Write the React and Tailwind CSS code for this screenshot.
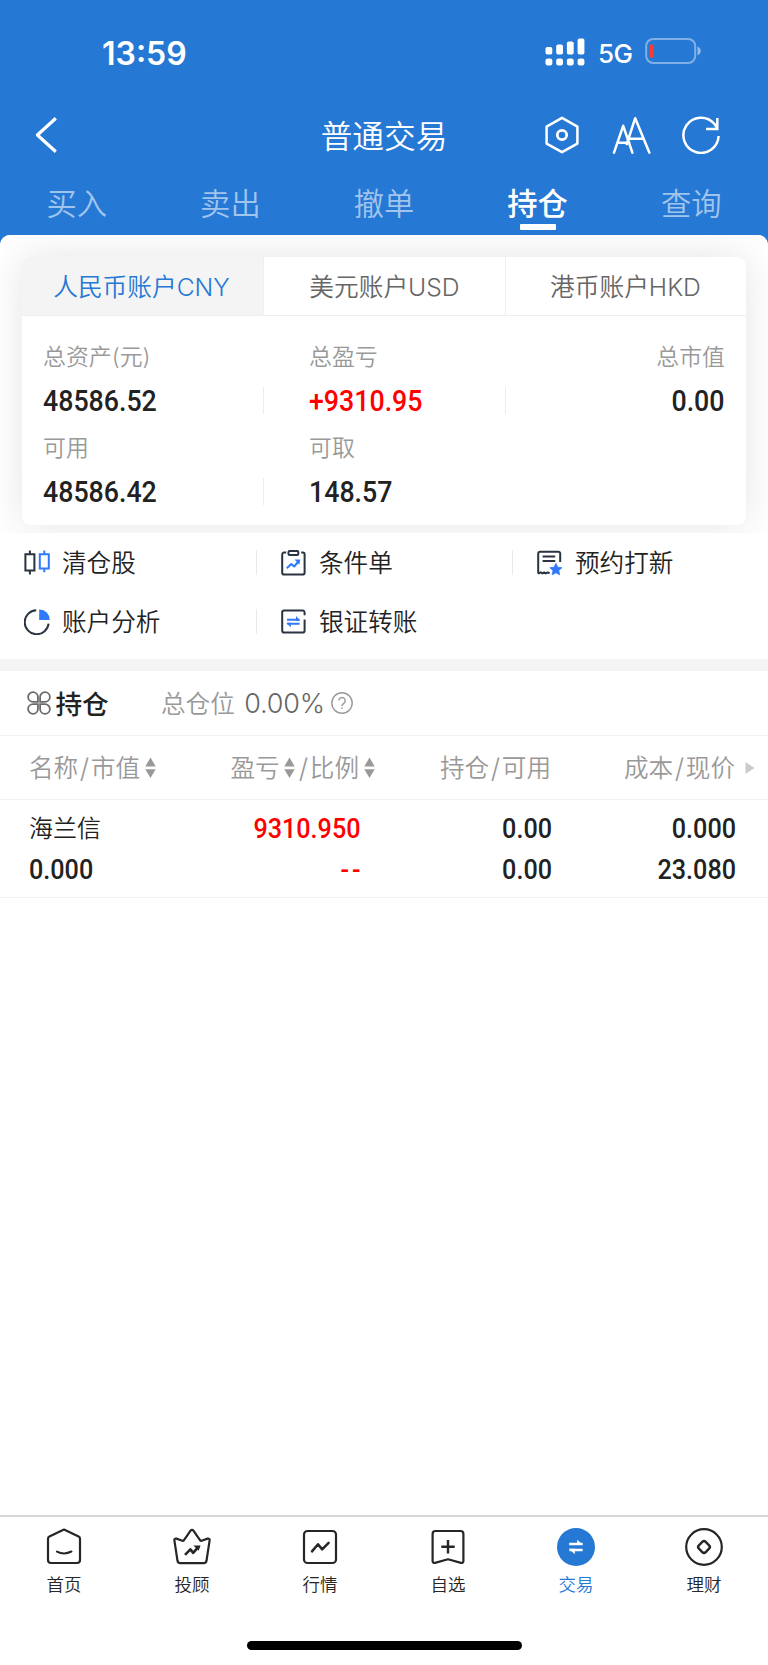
import React from "react";

const BASE_FONT = "font-['Inter','Noto_Sans_CJK_SC',sans-serif]";

function Num({ children, className = "", right = false }) {
  return (
    <span
      className={`inline-block font-['Roboto',sans-serif] font-medium whitespace-nowrap ${right ? "origin-right" : "origin-left"} scale-x-[0.922] ${className}`}
    >
      {children}
    </span>
  );
}

function StatusBar() {
  return (
    <div className="flex h-[104px] items-center pt-[2px] pl-[102px] pr-[66px] text-white">
      <span className="pt-[1px] text-[32px] leading-none font-semibold">13:59</span>
      <svg className="-mt-[2px] ml-auto" width="40" height="28" viewBox="0 0 40 28" fill="white">
        <rect x="0.5" y="9" width="6.8" height="7.5" rx="1.8" />
        <rect x="11.2" y="6.5" width="6.8" height="10" rx="1.8" />
        <rect x="21.9" y="3.5" width="6.8" height="13" rx="1.8" />
        <rect x="32.6" y="0.5" width="6.8" height="16" rx="1.8" />
        <rect x="0.5" y="20.4" width="6.8" height="7" rx="2.2" />
        <rect x="11.2" y="20.4" width="6.8" height="7" rx="2.2" />
        <rect x="21.9" y="20.4" width="6.8" height="7" rx="2.2" />
        <rect x="32.6" y="20.4" width="6.8" height="7" rx="2.2" />
      </svg>
      <span className="ml-[13px] w-[34px] pt-[1px] text-[26px] leading-none font-medium tracking-[-0.5px]">5G</span>
      <svg className="-mt-[4px] ml-[12px]" width="58" height="26" viewBox="0 0 58 26">
        <rect x="2.2" y="1" width="49" height="24" rx="7" fill="none" stroke="white" strokeOpacity="0.42" strokeWidth="2" />
        <rect x="5.3" y="6.5" width="4.2" height="13.2" rx="1.6" fill="#ff3b30" />
        <path d="M53.5 8.6c4.4 1.8 4.4 7 0 8.8z" fill="white" fillOpacity="0.5" />
      </svg>
    </div>
  );
}

function TitleBar() {
  return (
    <div className="grid h-[62px] grid-cols-3 items-center text-white">
      <svg className="ml-[34px]" width="24" height="38" viewBox="0 0 24 38" fill="none" stroke="white" strokeWidth="3.2">
        <path d="M21.8 2.2L3.400 19l18.400 16.800" strokeLinejoin="round" />
      </svg>
      <h1 className="pt-[3px] text-center text-[31.7px] leading-none font-[350] whitespace-nowrap">普通交易</h1>
      <div className="flex items-center justify-end pr-[48px]">
        <svg width="36" height="38" viewBox="0 0 36 38" fill="none" stroke="white" strokeWidth="2.5" strokeLinejoin="round">
          <path d="M18 1.8l15.4 8.8v17L18 36.2 2.600 27.600v-17z" />
          <circle cx="18" cy="19" r="4.700" strokeWidth="2.800" />
        </svg>
        <svg className="mr-[30px] ml-[32px]" width="40" height="38" viewBox="0 0 40 38" fill="none" stroke="white" strokeWidth="2.5" strokeLinecap="round" strokeLinejoin="round">
          <path d="M2 36.700L11.200 9.800l9.200 26.900M5.600 26.800h11.800" />
          <path d="M14.800 28L23.200 2.200l14.200 34.500M17 22.800h14.700" />
        </svg>
        <svg width="38" height="38" viewBox="0 0 38 38" fill="none" stroke="white" strokeWidth="2.500">
          <path d="M36.600 20a17.600 17.600 0 1 1-4.300-12.300l2.800 4.200" />
          <path d="M35.300 2v10.900H24" />
        </svg>
      </div>
    </div>
  );
}

const tabs = ["买入", "卖出", "撤单", "持仓", "查询"];

function Tabs() {
  return (
    <nav className="grid h-[69px] grid-cols-5">
      {tabs.map((t) =>
        t === "持仓" ? (
          <div key={t} className="flex flex-col items-center pt-[22px] text-white">
            <span className="text-[30.300px] leading-[32px] font-medium">{t}</span>
            <span className="mt-[4px] h-[6px] w-[36px] rounded-[1px] bg-white" />
          </div>
        ) : (
          <div key={t} className="flex flex-col items-center pt-[22px] text-[#a1c4ec]">
            <span className="text-[30.300px] leading-[32px] font-[350]">{t}</span>
          </div>
        )
      )}
    </nav>
  );
}

function Stat({ label, value, className = "", divider = false, red = false, right = false }) {
  return (
    <div className={`flex h-[91px] flex-col ${className}`}>
      <span className="text-[22.900px] leading-[29px] font-[350] text-[#999]">{label}</span>
      <div className={`mt-[15px] h-[27px] leading-[29px] ${divider ? "border-r border-[#ececec]" : ""}`}>
        <Num right={right} className={red ? "text-[29px] text-[#ff0000]" : "text-[29px] text-[#222]"}>{value}</Num>
      </div>
    </div>
  );
}

function Account() {
  return (
    <section className="h-[298px] overflow-hidden bg-white px-[22px] pt-[22px]">
      <div className="h-[268px] overflow-hidden rounded-[9px] bg-white shadow-[0_0_40px_rgba(0,0,0,0.11)]">
        <div className="grid h-[59px] grid-cols-[242px_242px_240px] border-b border-[#efefef] text-[24.700px] font-[350]">
          <div className="flex items-center justify-center border-r border-[#efefef] bg-[#f4f4f4] pt-[3px] pr-[2px] text-[#2678d5]">人民币账户CNY</div>
          <div className="flex items-center justify-center border-r border-[#efefef] pt-[3px] text-[#666]">美元账户USD</div>
          <div className="flex items-center justify-center pt-[3px] pr-[1px] text-[#666]">港币账户HKD</div>
        </div>
        <div className="grid grid-cols-[242px_242px_240px] pt-[27px]">
          <Stat label="总资产(元)" value="48586.52" className="pl-[21px]" divider />
          <Stat label="总盈亏" value="+9310.95" className="pl-[45px]" divider red />
          <Stat label="总市值" value="0.00" className="pr-[21px] text-right" right />
          <Stat label="可用" value="48586.42" className="pl-[21px]" divider />
          <Stat label="可取" value="148.57" className="pl-[45px]" />
        </div>
      </div>
    </section>
  );
}

const NAVY = "#2a3342";
const BLUE = "#3079fb";

function CandleIcon() {
  return (
    <svg width="26" height="26" viewBox="0 0 26 26" fill="none" strokeWidth="2">
      <path d="M1.400 4.300h9v16.200h-9zM5.900 .5v3.800M5.900 20.500v4" stroke={NAVY} />
      <path d="M15.800 4.300h9v14.200h-9zM20.300 .5v3.800M20.300 18.500v3.700" stroke={BLUE} />
    </svg>
  );
}
function ClipIcon() {
  return (
    <svg width="26" height="26" viewBox="0 0 26 26" fill="none" strokeWidth="2" strokeLinejoin="round">
      <path d="M5.200 2.600H3a1.800 1.800 0 0 0-1.800 1.800v18.400a1.800 1.800 0 0 0 1.800 1.800h18.800a1.800 1.800 0 0 0 1.800-1.800V4.400a1.800 1.800 0 0 0-1.800-1.800h-1.600" stroke={NAVY} />
      <rect x="7.500" y="1.100" width="9.800" height="3.900" rx="1" stroke={NAVY} />
      <path d="M5.800 18.200l4.400-4.100 3 2.400 4.200-5" stroke={BLUE} />
      <path d="M13.600 9.600h5.600l-.8 5.200z" fill={BLUE} />
    </svg>
  );
}
function StarIcon() {
  return (
    <svg width="26" height="26" viewBox="0 0 26 26" fill="none" strokeWidth="2">
      <path d="M23.200 12V3.600a1.800 1.800 0 0 0-1.800-1.800H3a1.800 1.800 0 0 0-1.800 1.800v18.800q0 1 1 .8l1.600-.8 1.700 1 1.700-1 1.700 1 1.700-1 2 .8" stroke={NAVY} strokeLinejoin="round" />
      <path d="M5.600 6.600h12.600M5.600 11h12.600" stroke={NAVY} />
      <path d="M18.900 13.400l1.800 3.800 4.200.5-3.100 2.900.8 4.200-3.700-2-3.700 2 .8-4.200-3.100-2.900 4.200-.5z" fill={BLUE} stroke={BLUE} strokeWidth="0.8" strokeLinejoin="round" />
    </svg>
  );
}
function PieIcon() {
  return (
    <svg width="26" height="26" viewBox="0 0 26 26" fill="none" strokeWidth="2">
      <path d="M12.200 1.200A12 12 0 1 0 24.600 14.600" stroke={NAVY} />
      <path d="M15.200.4a10 10 0 0 1 10.400 10.600H15.200z" fill={BLUE} />
    </svg>
  );
}
function TransferIcon() {
  return (
    <svg width="26" height="26" viewBox="0 0 26 26" fill="none" strokeWidth="2">
      <path d="M23.600 6.200V3.400a1.800 1.800 0 0 0-1.800-1.800H3a1.800 1.800 0 0 0-1.800 1.800v18.400a1.800 1.800 0 0 0 1.800 1.800h18.800a1.800 1.800 0 0 0 1.800-1.800V10.400" stroke={NAVY} />
      <path d="M6 10.800h12.400M18.600 14.800H6.200" stroke={BLUE} />
      <path d="M15 7l4.400 4.800H15zM9.800 18.600l-4.400-4.800h4.400z" fill={BLUE} />
    </svg>
  );
}

function Action({ icon: Icon, label, divider = false }) {
  return (
    <div className={`flex h-[25px] items-center pl-[23.500px] text-[#222] ${divider ? "border-r border-[#e9e9e9]" : ""}`}>
      <Icon />
      <span className="ml-[12.500px] pt-[2px] text-[24.600px] leading-none font-[350] whitespace-nowrap">{label}</span>
    </div>
  );
}

function Actions() {
  return (
    <section className="grid h-[126px] grid-cols-[257px_256px_255px] content-start gap-y-[34px] bg-white pt-[17px]">
      <Action icon={CandleIcon} label="清仓股" divider />
      <Action icon={ClipIcon} label="条件单" divider />
      <Action icon={StarIcon} label="预约打新" />
      <Action icon={PieIcon} label="账户分析" divider />
      <Action icon={TransferIcon} label="银证转账" />
    </section>
  );
}

function Sort({ className = "" }) {
  return (
    <svg className={className} width="11" height="22" viewBox="0 0 11 22" fill="#999">
      <path d="M5.500 .5L10.700 9.500H.3zM5.500 21L10.700 12.300H.3z" />
    </svg>
  );
}

function Slash() {
  return <span className="inline-block w-[12.600px] text-center text-[27px] leading-none">/</span>;
}

function Holdings() {
  return (
    <section className="bg-white">
      <div className="flex h-[65px] items-center border-b border-[#f2f2f2] pl-[27px]">
        <svg width="24" height="24" viewBox="0 0 24 24" fill="none" stroke="#6b6b6b" strokeWidth="1.800">
          <path d="M10.900 10.900H6A4.900 4.900 0 1 1 10.900 6zM13.100 10.900V6A4.900 4.900 0 1 1 18 10.900zM10.900 13.100V18A4.900 4.900 0 1 1 6 13.100zM13.100 13.100H18A4.900 4.900 0 1 1 13.100 18z" />
        </svg>
        <span className="ml-[4.500px] w-[105.500px] pt-[2px] text-[26.600px] leading-none font-medium text-[#222]">持仓</span>
        <span className="pt-[2px] text-[24.600px] leading-none font-[350] text-[#999]">总仓位</span>
        <span className="ml-[9.500px] w-[80px] pt-[1px] text-[27px] leading-none font-[350] tracking-[-0.200px] text-[#666]">0.00%</span>
        <svg className="ml-[7px]" width="22" height="22" viewBox="0 0 22 22" fill="none" stroke="#999" strokeWidth="1.400">
          <circle cx="11" cy="11" r="10.200" />
          <path d="M7.800 8.600a3.200 3.200 0 1 1 5 2.700c-1.200.8-1.800 1.200-1.800 2.600" />
          <path d="M11 15.400v1.600" />
        </svg>
      </div>
      <div className="grid h-[64px] grid-cols-[215px_176px_160px_217px] items-center border-b border-[#f2f2f2] text-[24.600px] leading-none font-[350] whitespace-nowrap text-[#999]">
        <span className="flex items-center pl-[29px] pt-[2px]">名称<Slash />市值<Sort className="-mt-[2px] ml-[4.500px]" /></span>
        <span className="flex items-center pl-[15.500px] pt-[2px]">盈亏<Sort className="-mt-[2px] ml-[4px] mr-[2.500px]" /><Slash />比例<Sort className="-mt-[2px] ml-[4.500px]" /></span>
        <span className="flex items-center justify-end pt-[2px]">持仓<Slash />可用</span>
        <span className="flex items-center justify-end pr-[13.500px] pt-[2px]">
          成本<Slash />现价
          <svg className="-mt-[2px] ml-[9.500px]" width="10" height="12" viewBox="0 0 10 12" fill="#ccc"><path d="M.5 0l9 6-9 6z" /></svg>
        </span>
      </div>
      <div className="grid h-[98px] grid-cols-[215px_145.500px_191px_184px] content-start gap-y-[13px] border-b border-[#f2f2f2] pt-[15px] text-[27.300px] leading-[28px] text-[#222]">
        <span className="pl-[29px] text-[24px] font-[350]">海兰信</span>
        <Num right className="text-right text-[#ff0000]">9310.950</Num>
        <Num right className="text-right">0.00</Num>
        <Num right className="text-right">0.000</Num>
        <span className="flex pl-[28.500px]"><Num>0.000</Num></span>
        <Num right className="text-right tracking-[3px] text-[#ff0000]"><span className="-mr-[3px]">--</span></Num>
        <Num right className="text-right">0.00</Num>
        <Num right className="text-right">23.080</Num>
      </div>
    </section>
  );
}

const navItems = [
  { label: "首页", art: (<><path d="M20 2.600l14.600 6.900a2.400 2.400 0 0 1 1.400 2.200V33a3 3 0 0 1-3 3H7a3 3 0 0 1-3-3V11.700a2.400 2.400 0 0 1 1.400-2.200z" /><path d="M13 24.600q7 3.800 14.400 0" strokeLinecap="round" /></>) },
  { label: "投顾", art: (<><path d="M18.600 3.600a1.700 1.700 0 0 1 2.800 0l6.800 9.800a1.200 1.200 0 0 0 1.400.4l6-2.200a1.500 1.500 0 0 1 2 1.700l-3.100 20.500a3 3 0 0 1-2.900 2.400H8.400a3 3 0 0 1-2.900-2.400L2.400 13.300a1.500 1.500 0 0 1 2-1.700l6 2.200a1.200 1.200 0 0 0 1.400-.4z" /><path d="M13 27.800l5.400-5.400 2.800 3.400 5.400-6.200" strokeWidth="2.600" /><path d="M21.400 18.400h7.200l-2 5.400z" fill="currentColor" stroke="none" /></>) },
  { label: "行情", art: (<><rect x="4" y="4" width="32" height="32" rx="3.600" /><path d="M12 24.400l6-7.200 4.200 5.200 6.400-6.600" strokeWidth="2.500" strokeLinecap="round" /></>) },
  { label: "自选", art: (<><path d="M7.400 4h25.200a2.800 2.800 0 0 1 2.800 2.800v27.400a1.800 1.800 0 0 1-2.400 1.700L20 32.200 7 35.900a1.800 1.800 0 0 1-2.400-1.700V6.800A2.800 2.800 0 0 1 7.400 4z" /><path d="M20 13v13.400M13.300 19.700h13.400" strokeWidth="2.400" /></>) },
  { label: "交易", active: true, art: (<><circle cx="20" cy="20" r="19" fill="#2678d5" stroke="none" /><path d="M13.200 16.900h13.400M26.600 22.900H13.400" stroke="white" strokeWidth="2.500" /><path d="M21.200 12.800l5.800 5.200h-5.800zM18.800 27.200l-5.800-5.400h5.800z" fill="white" stroke="none" /></>) },
  { label: "理财", art: (<><circle cx="20" cy="20" r="17.800" /><rect x="15.200" y="15.200" width="9.600" height="9.600" rx="2.400" transform="rotate(45 20 20)" strokeWidth="2.400" /></>) },
];

function BottomNav() {
  return (
    <footer className="mt-auto flex h-[150px] flex-col items-center border-t-2 border-[#d5d6d6] bg-white">
      <nav className="grid w-full grid-cols-6 pt-[9.500px]">
        {navItems.map((n) => (
          <div key={n.label} className={n.active ? "flex flex-col items-center text-[#2678d5]" : "flex flex-col items-center text-[#262626]"}>
            <svg width="40" height="40" viewBox="0 0 40 40" fill="none" stroke="currentColor" strokeWidth="2.200" strokeLinejoin="round">{n.art}</svg>
            <span className="mt-[8.500px] text-[17.500px] leading-[20px] font-[350]">{n.label}</span>
          </div>
        ))}
      </nav>
      <div className="mt-auto mb-[15px] h-[9px] w-[275px] rounded-full bg-black" />
    </footer>
  );
}

export default function App() {
  return (
    <div className={`flex h-[1665px] w-[768px] flex-col overflow-hidden bg-white ${BASE_FONT}`}>
      <div className="bg-[#2678d5]">
        <StatusBar />
        <TitleBar />
        <Tabs />
        <div className="overflow-hidden rounded-t-[10px] bg-white">
          <Account />
        </div>
      </div>
      <Actions />
      <div className="h-[12px] bg-[#f4f4f4]" />
      <Holdings />
      <BottomNav />
    </div>
  );
}
